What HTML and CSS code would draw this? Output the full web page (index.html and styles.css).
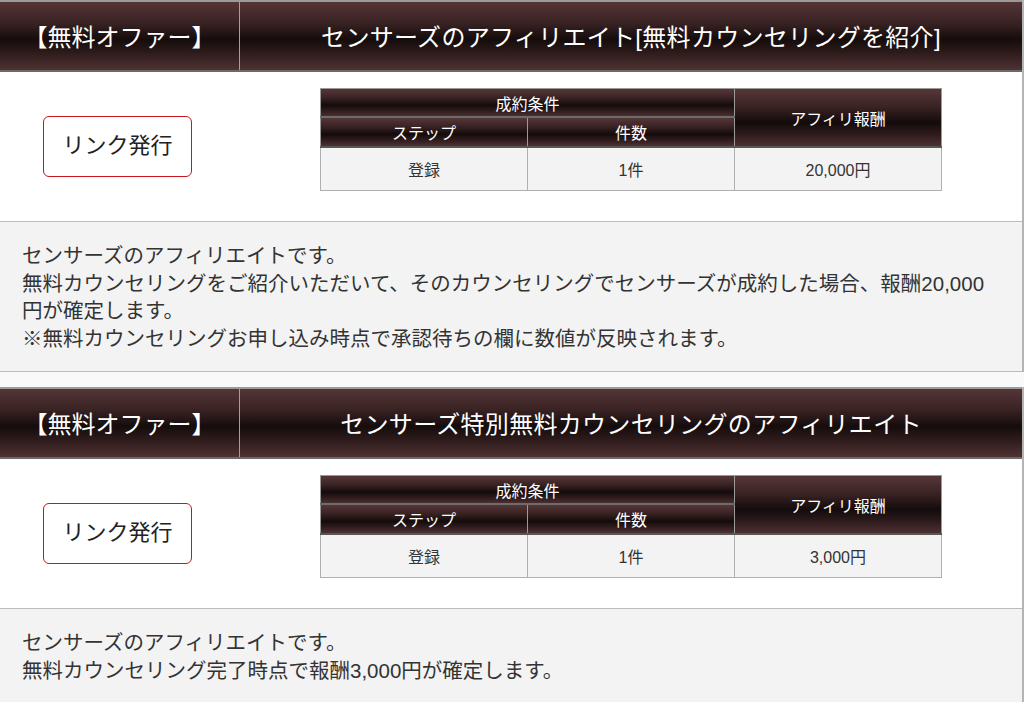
FILE: index.html
```html
<!DOCTYPE html>
<html lang="ja">
<head>
<meta charset="utf-8">
<title>アフィリエイト</title>
<link rel="stylesheet" href="styles.css">
</head>
<body>
<div class="list">
  <section class="offer">
    <div class="offer-head">
      <div class="offer-type">【無料オファー】</div>
      <div class="offer-title">センサーズのアフィリエイト[無料カウンセリングを紹介]</div>
    </div>
    <div class="offer-body">
      <div class="offer-action"><a class="link-btn" href="#">リンク発行</a></div>
      <div class="offer-cond">
        <table class="cond-table">
          <tr class="row-h1"><th colspan="2">成約条件</th><th rowspan="2" class="reward-h">アフィリ報酬</th></tr>
          <tr class="row-h2"><th>ステップ</th><th>件数</th></tr>
          <tr class="row-d"><td>登録</td><td>1件</td><td>20,000円</td></tr>
        </table>
      </div>
    </div>
    <div class="offer-desc">センサーズのアフィリエイトです。<br>無料カウンセリングをご紹介いただいて、そのカウンセリングでセンサーズが成約した場合、報酬20,000円が確定します。<br>※無料カウンセリングお申し込み時点で承認待ちの欄に数値が反映されます。</div>
  </section>
  <section class="offer">
    <div class="offer-head">
      <div class="offer-type">【無料オファー】</div>
      <div class="offer-title">センサーズ特別無料カウンセリングのアフィリエイト</div>
    </div>
    <div class="offer-body">
      <div class="offer-action"><a class="link-btn" href="#">リンク発行</a></div>
      <div class="offer-cond">
        <table class="cond-table">
          <tr class="row-h1"><th colspan="2">成約条件</th><th rowspan="2" class="reward-h">アフィリ報酬</th></tr>
          <tr class="row-h2"><th>ステップ</th><th>件数</th></tr>
          <tr class="row-d"><td>登録</td><td>1件</td><td>3,000円</td></tr>
        </table>
      </div>
    </div>
    <div class="offer-desc">センサーズのアフィリエイトです。<br>無料カウンセリング完了時点で報酬3,000円が確定します。</div>
  </section>
</div>
</body>
</html>
```

FILE: styles.css
```css
html, body {
  margin: 0;
  padding: 0;
  background: #f9f9f9;
  font-family: "Liberation Sans", "Noto Sans CJK JP", sans-serif;
  color: #333;
}

.list {
  width: 1024px;
  display: flex;
  flex-direction: column;
  gap: 15px;
}

.offer {
  background: #fff;
  border-right: 2px solid #b4b4b4;
}

.offer-head {
  display: flex;
  height: 68px;
  border-top: 2px solid #9a9a9a;
  border-bottom: 2px solid #6a6a6a;
  background: linear-gradient(to bottom, #553536 0%, #3a2324 30%, #150c0c 55%, #2a1919 72%, #503233 100%);
  color: #fff;
  font-size: 24px;
}

.offer-type {
  width: 240px;
  border-right: 1px solid #a0a0a0;
  display: flex;
  align-items: center;
  justify-content: center;
  flex: none;
  padding-bottom: 2px;
  box-sizing: border-box;
}

.offer-title {
  flex: 1;
  display: flex;
  align-items: center;
  justify-content: center;
  letter-spacing: 0.3px;
  padding-bottom: 2px;
}

.offer-body {
  display: flex;
  height: 149px;
}

.offer-action {
  width: 240px;
  flex: none;
  display: flex;
  align-items: center;
  justify-content: center;
  padding-right: 5px;
  box-sizing: border-box;
}

.link-btn {
  display: flex;
  align-items: center;
  justify-content: center;
  width: 149px;
  height: 61px;
  box-sizing: border-box;
  border: 1.5px solid #c8161d;
  border-radius: 6px;
  color: #222;
  text-decoration: none;
  font-size: 22px;
  padding-bottom: 7px;
}

.offer-cond {
  flex: 1;
  padding-top: 16px;
}

.cond-table {
  border-collapse: collapse;
  width: 622px;
  margin: 0 0 0 80px;
  font-size: 16px;
  table-layout: fixed;
}

.cond-table th {
  font-weight: normal;
  color: #fff;
  background: linear-gradient(to bottom, #563637 0%, #3a2324 30%, #130b0b 58%, #2e1b1c 78%, #4e3132 100%);
  border: 1px solid #9a9a9a;
  padding: 0;
  text-align: center;
}

.row-h1 th {
  height: 27px;
  border-bottom: 2px solid #6c6c6c;
}

.row-h2 th {
  height: 28px;
  border-bottom: 2px solid #575757;
}

.cond-table th.reward-h {
  border-bottom: 2px solid #575757;
}

.cond-table td {
  background: #f3f3f3;
  height: 42px;
  border: 1px solid #b0b0b0;
  text-align: center;
  padding: 0;
  color: #333;
}

.offer-desc {
  border-top: 1px solid #bcbcbc;
  border-bottom: 1px solid #bcbcbc;
  background: #f3f3f3;
  height: 151px;
  box-sizing: border-box;
  padding: 20px 22px 0 22px;
  font-size: 20.5px;
  line-height: 27.5px;
  color: #333;
}

.offer:last-child .offer-desc {
  height: 120px;
}
```
